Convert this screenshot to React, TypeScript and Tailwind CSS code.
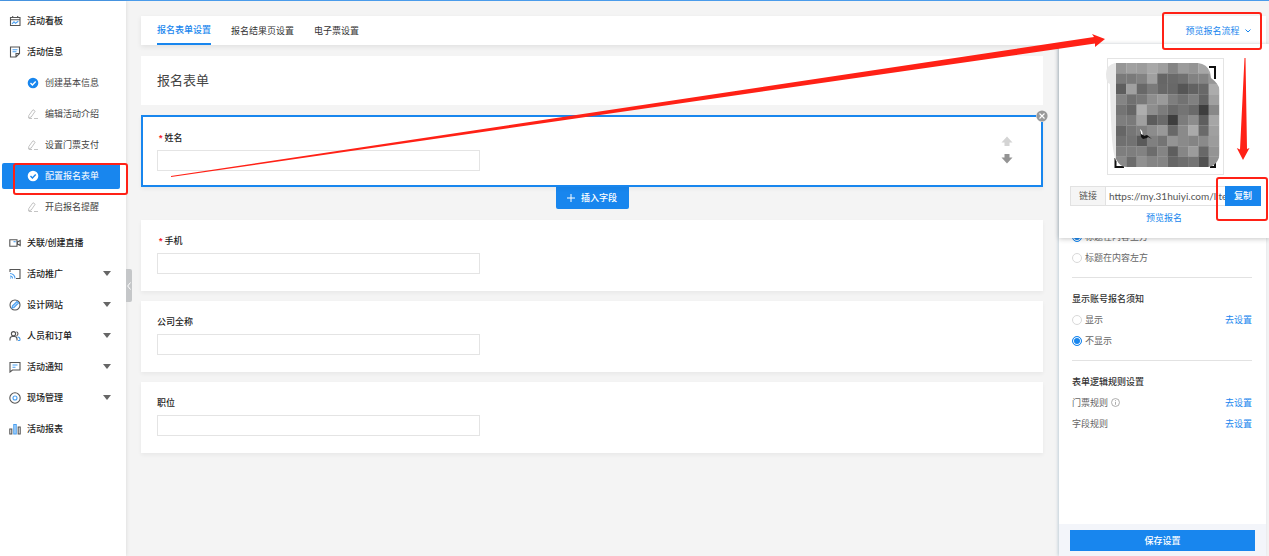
import React, { useState } from "react";

const MOSAIC = [
  [150, 160, 156, 168, 158, 132, 155, 148, 166, 172],
  [122, 122, 130, 160, 102, 106, 112, 130, 132, 150],
  [94, 160, 104, 122, 104, 104, 86, 98, 104, 172],
  [132, 112, 120, 142, 154, 126, 114, 128, 100, 160],
  [116, 102, 174, 142, 124, 106, 116, 106, 62, 136],
  [126, 122, 160, 92, 106, 62, 124, 140, 94, 166],
  [102, 118, 128, 140, 152, 104, 138, 170, 106, 160],
  [112, 114, 90, 128, 116, 148, 138, 132, 138, 156],
  [126, 126, 130, 108, 132, 94, 134, 156, 104, 148],
  [138, 108, 144, 132, 132, 102, 110, 116, 82, 146],
];

type IconName =
  | "board" | "info" | "live" | "cast" | "design" | "people" | "notice" | "onsite" | "report";

function MenuIcon({ name }: { name: IconName }) {
  const dark = "#555";
  const blue = "#4a9ff0";
  return (
    <svg viewBox="0 0 12 12" className="size-3 shrink-0" fill="none" stroke={dark} strokeWidth="1.1">
      {name === "board" && (
        <>
          <path d="M1.500 2.500h9.500v8h-9.500zM1.500 4.700h9.500M3.700 1v2M8.700 1v2" />
          <path d="M3 8.800l2-2 1.500 1.500L9.300 6.300" stroke={blue} />
        </>
      )}
      {name === "info" && (
        <>
          <path d="M10.500 7.500V1h-9v10h5.500zM10.500 7.500H7V11" />
          <path d="M3.500 3.700h5M3.500 5.700h4" stroke={blue} />
        </>
      )}
      {name === "live" && (
        <>
          <path d="M.8 2.800h7.200v6.500H.8zM8.500 5l2.700-1.500v5L8.500 7z" />
          <path d="M4.500 4.700h2.200" stroke={blue} />
        </>
      )}
      {name === "cast" && (
        <>
          <path d="M1 4V1.500h10v9H7" />
          <path d="M1 5.500A5 5 0 0 1 6 10.500M1 8a2.500 2.500 0 0 1 2.500 2.500M1 10h1" stroke={blue} />
        </>
      )}
      {name === "design" && (
        <>
          <circle cx="6" cy="6" r="5" />
          <path d="M3 9l.5-2.200L8 2.500l1.500 1.500L5 8.500z" stroke={blue} fill="#b9dbfb" />
        </>
      )}
      {name === "people" && (
        <>
          <circle cx="4.500" cy="3.700" r="2.100" />
          <path d="M1 10.500V9a2.500 2.500 0 0 1 2.500-2.500h2A2.500 2.500 0 0 1 8 9v1.500M7.500 1.700a2.100 2.100 0 0 1 0 4" />
          <path d="M8.500 7a2.500 2.500 0 0 1 2.500 2.500v1M9 10.500h2" stroke={blue} />
        </>
      )}
      {name === "notice" && (
        <>
          <path d="M1 11V1.500h10V9H3.500z" />
          <path d="M3.500 4h5M3.500 6.200h3" stroke={blue} />
        </>
      )}
      {name === "onsite" && (
        <>
          <circle cx="6" cy="6" r="5.200" />
          <circle cx="6" cy="6" r="2" stroke={blue} />
        </>
      )}
      {name === "report" && (
        <>
          <path d="M.8 6h2v5h-2zM9.200 4h2v7h-2z" />
          <path d="M4.800 1.500h2.400V11H4.800z" stroke={blue} fill="#b9dbfb" />
        </>
      )}
    </svg>
  );
}

function CheckDot({ inverted }: { inverted?: boolean }) {
  return (
    <svg viewBox="0 0 12 12" className="size-3 shrink-0">
      <circle cx="6" cy="6" r="5.300" fill={inverted ? "#fff" : "#1886ee"} />
      <path d="M3.500 6l1.900 1.900L8.700 4.600" fill="none" stroke={inverted ? "#1886ee" : "#fff"} strokeWidth="1.400" />
    </svg>
  );
}

function Pencil() {
  return (
    <svg viewBox="0 0 12 12" className="size-3 shrink-0" fill="none" stroke="#c4c4c4">
      <path d="M1.800 7.500L6 1.700 8.200 3.200 4.200 9 1.500 10zM2 10.500h3M7 10.500H11" />
    </svg>
  );
}

function MenuRow({ icon, label, open }: { icon: IconName; label: string; open?: boolean }) {
  return (
    <a href="#" className="flex h-[31px] items-center gap-[6px] pr-[15px] pl-[9px] font-medium text-[#222]">
      <MenuIcon name={icon} />
      <span className="flex-1">{label}</span>
      {open && (
        <svg viewBox="0 0 8 5" className="h-[5px] w-2" fill="#666"><path d="M0 0h8L4 5z" /></svg>
      )}
    </a>
  );
}

function SubRow({ label, state }: { label: string; state: "done" | "todo" | "active" }) {
  if (state === "active") {
    return (
      <div className="flex h-[31px] items-center pr-[6px] pl-[2px]">
        <a href="#" className="relative flex h-[26px] flex-1 items-center gap-[6px] rounded-xs bg-[#1886ee] pl-[25px] text-white">
          <CheckDot inverted />
          {label}
          <span className="pointer-events-none absolute top-0 -right-[8px] -bottom-[6px] left-[11px] z-20 rounded-[3px] border-2 border-[#ff2116]" />
        </a>
      </div>
    );
  }
  return (
    <a href="#" className="flex h-[31px] items-center gap-[6px] pl-[27px] text-[#444]">
      {state === "done" ? <CheckDot /> : <Pencil />}
      {label}
    </a>
  );
}

function Sidebar() {
  return (
    <aside className="relative w-[126px] shrink-0 bg-white pt-[4px] shadow-[0_0_4px_rgba(0,0,0,0.12)]">
      <nav>
        <MenuRow icon="board" label="活动看板" />
        <MenuRow icon="info" label="活动信息" />
        <SubRow label="创建基本信息" state="done" />
        <SubRow label="编辑活动介绍" state="todo" />
        <SubRow label="设置门票支付" state="todo" />
        <SubRow label="配置报名表单" state="active" />
        <SubRow label="开启报名提醒" state="todo" />
        <div className="pt-[5px]">
          <MenuRow icon="live" label="关联/创建直播" />
          <MenuRow icon="cast" label="活动推广" open />
          <MenuRow icon="design" label="设计网站" open />
          <MenuRow icon="people" label="人员和订单" open />
          <MenuRow icon="notice" label="活动通知" open />
          <MenuRow icon="onsite" label="现场管理" open />
          <MenuRow icon="report" label="活动报表" />
        </div>
      </nav>
      <button aria-label="收起" className="absolute top-[268px] left-full flex h-[33px] w-[6px] items-center justify-center rounded-r-xs bg-[#c5c7c9]">
        <svg viewBox="0 0 4 8" className="h-2 w-1" fill="none" stroke="#fff"><path d="M3.500 .5L.7 4l2.800 3.500" /></svg>
      </button>
    </aside>
  );
}

function Field({ id, label, required }: { id: string; label: string; required?: boolean }) {
  return (
    <div className="flex flex-col items-start gap-[5px]">
      <label htmlFor={id} className="flex h-[14px] items-center gap-[2px] font-medium text-[#222]">
        {required && <span className="pl-[2px] font-bold text-[#f5222d]">*</span>}
        {label}
      </label>
      <input id={id} className="h-[21px] w-full max-w-[323px] border border-[#e4e4e4] bg-white px-2 outline-none" />
    </div>
  );
}

function FieldCard({ id, label, required }: { id: string; label: string; required?: boolean }) {
  return (
    <section className="h-[71px] bg-white px-4 pt-[14px] shadow-[0_2px_4px_rgba(0,0,0,0.05)]">
      <Field id={id} label={label} required={required} />
    </section>
  );
}

function Radio({ name, label, checked, onChange }: { name: string; label: string; checked: boolean; onChange: () => void }) {
  return (
    <label className="flex h-[21px] items-center gap-[3px]">
      <input
        type="radio"
        name={name}
        checked={checked}
        onChange={onChange}
        className="size-[10px] appearance-none rounded-full border border-[#d9d9d9] bg-white checked:border-[#1886ee] checked:bg-[#1886ee] checked:shadow-[inset_0_0_0_1px_#fff]"
      />
      {label}
    </label>
  );
}

function GoSet() {
  return <a href="#" className="text-[#1886ee]">去设置</a>;
}

function SettingsPanel() {
  const [place, setPlace] = useState("top");
  const [notice, setNotice] = useState("hide");
  return (
    <aside className="flex w-[207px] shrink-0 flex-col bg-white text-[#666] shadow-[-1px_0_3px_rgba(100,140,170,0.35)]">
      <div className="flex-1 pt-[181px] pr-[14px] pl-[13px]">
        <Radio name="place" label="标题在内容上方" checked={place === "top"} onChange={() => setPlace("top")} />
        <Radio name="place" label="标题在内容左方" checked={place === "left"} onChange={() => setPlace("left")} />
        <section className="mt-[9px] border-t border-[#e2e2e2] pt-[11px]">
          <h3 className="h-[20px] font-medium leading-[20px] text-[#333]">显示账号报名须知</h3>
          <div className="flex items-center justify-between">
            <Radio name="notice" label="显示" checked={notice === "show"} onChange={() => setNotice("show")} />
            <GoSet />
          </div>
          <Radio name="notice" label="不显示" checked={notice === "hide"} onChange={() => setNotice("hide")} />
        </section>
        <section className="mt-[9px] border-t border-[#e2e2e2] pt-[11px]">
          <h3 className="h-[20px] font-medium leading-[20px] text-[#333]">表单逻辑规则设置</h3>
          <div className="flex h-[21px] items-center justify-between">
            <span className="flex items-center gap-[3px]">
              门票规则
              <svg viewBox="0 0 10 10" className="size-[9px]" fill="none" stroke="#999" strokeWidth=".9">
                <circle cx="5" cy="5" r="4.400" /><path d="M5 4.300V7.500M5 2.400v1" />
              </svg>
            </span>
            <GoSet />
          </div>
          <div className="flex h-[21px] items-center justify-between">
            <span>字段规则</span>
            <GoSet />
          </div>
        </section>
      </div>
      <div className="bg-[#f3f5fa] px-[11px] pt-[6px] pb-[5px]">
        <button className="h-[21px] w-full bg-[#1886ee] font-medium text-white">保存设置</button>
      </div>
    </aside>
  );
}

function QrCode() {
  return (
    <svg viewBox="0 0 118 118" className="ml-[2px] size-[118px]" aria-label="二维码">
      <rect x="1.500" y=".5" width="116" height="116" fill="#fff" stroke="#e4e4e4" />
      <path d="M103 9h6v12M9.500 100v9H18M104 109h5v-9" fill="none" stroke="#111" strokeWidth="2" />
      <path d="M9 5h8v98h-7q-3-8-4-22T4 26q-4-1-4-10T9 5z" fill="#e8e8e8" />
      <clipPath id="qr-blur">
        <path d="M10 5H92q9 1 12 9l1 6q7 5 9 12V95q-2 13-12 14H20q-6 0-10-8z" />
      </clipPath>
      <g clipPath="url(#qr-blur)">
        {MOSAIC.map((row, y) =>
          row.map((v, x) => (
            <rect key={`${x}-${y}`} x={10 + x * 10.3} y={5 + y * 10.4} width="10.500" height="10.600" fill={`rgb(${v},${v},${v})`} />
          )),
        )}
      </g>
      <path d="M34 72l1 7 2 2 4-1 1-1 4 2-5-4-3 1z" fill="#111" />
      <path d="M34 71l1 5 2 1-1-4z" fill="#fff" />
    </svg>
  );
}

function PreviewPopover() {
  return (
    <div className="absolute top-[43px] right-0 z-10 flex w-[210px] flex-col items-center bg-white pt-[14px] pb-[13px] shadow-[0_1px_5px_rgba(0,0,0,0.22)]">
      <QrCode />
      <div className="mt-[10px] flex h-[20px] self-start pl-[11px]">
        <label htmlFor="link" className="flex w-[36px] shrink-0 items-center justify-center border border-[#e2e2e2] bg-[#f5f5f5] text-[#555]">链接</label>
        <input id="link" readOnly value="https://my.31huiyi.com/lite" className="w-[119px] min-w-0 shrink-0 border-y border-[#e2e2e2] pl-[3px] font-['Lato','Open_Sans',sans-serif] text-[10px] text-[#555] outline-none" />
        <button className="relative w-[36px] shrink-0 bg-[#1886ee] font-medium text-white">
          复制
          <span className="pointer-events-none absolute -top-[9px] -right-[7px] -bottom-[15px] -left-[9px] rounded-[3px] border-2 border-[#ff2116]" />
        </button>
      </div>
      <a href="#" className="mt-[5px] leading-[14px] text-[#1886ee]">预览报名</a>
      <svg viewBox="0 0 14 104" className="pointer-events-none absolute top-[14px] right-[19px] h-[104px] w-[14px]" fill="#ff2116">
        <path d="M8.500 0h1l1.500 91 2.500-1L7 102 .8 90l3.200 1.500z" />
      </svg>
    </div>
  );
}

export default function App() {
  return (
    <div className="relative flex min-h-screen border-t border-[#4a9bea] bg-[#f4f4f4] font-['Liberation_Sans','Noto_Sans_CJK_SC',sans-serif] text-[9px] leading-[14px]">
      <Sidebar />
      <div className="flex min-w-0 flex-1 flex-col pt-[15px] pr-[3px] pl-[15px]">
        <header className="flex h-[29px] items-stretch bg-white shadow-[0_2px_5px_rgba(0,0,0,0.08)]">
          <nav className="flex flex-1 gap-[20px] pl-4 text-[#333]">
            <a href="#" className="flex items-center border-b-2 border-[#1886ee] font-medium text-[#1886ee]">报名表单设置</a>
            <a href="#" className="flex items-center">报名结果页设置</a>
            <a href="#" className="flex items-center">电子票设置</a>
          </nav>
          <button className="relative flex w-[96px] items-center justify-center gap-[5px] text-[#1886ee]">
            预览报名流程
            <svg viewBox="0 0 6 4" className="h-1 w-[6px]" fill="none" stroke="#1886ee"><path d="M.5 .5L3 3 5.500 .5" /></svg>
            <span className="pointer-events-none absolute -top-[4px] right-[4px] -bottom-[5px] -left-[8px] z-20 rounded-[3px] border-2 border-[#ff2116]" />
          </button>
        </header>
        <div className="flex flex-1 gap-4">
          <main className="min-w-0 flex-1 pt-[11px]">
            <h1 className="flex h-[49px] items-center bg-white pl-4 text-[13px] text-[#444]">报名表单</h1>
            <section className="relative mt-[10px] flex h-[72px] justify-between border-2 border-[#1886ee] bg-white pt-[14px] pr-[28px] pl-[14px] shadow-[0_2px_4px_rgba(0,0,0,0.05)]">
              <div className="flex-1"><Field id="name" label="姓名" required /></div>
              <div className="flex flex-col gap-[6px] pt-[5px]">
                <button aria-label="上移"><svg viewBox="0 0 12 11" className="h-[11px] w-3" fill="#d4d4d4"><path d="M6 .5l5.500 6H8.500V10h-5V6.500H.5z" /></svg></button>
                <button aria-label="下移"><svg viewBox="0 0 12 11" className="h-[11px] w-3" fill="#949494"><path d="M6 10.500l5.500-6H8.500V1h-5v3.500H.5z" /></svg></button>
              </div>
              <button aria-label="删除" className="absolute -top-[7px] -right-[7px] rounded-full bg-[#f4f4f4]">
                <svg viewBox="0 0 12 12" className="size-3"><circle cx="6" cy="6" r="5.600" fill="#999" /><path d="M3.500 3.500l5 5M8.500 3.500l-5 5" stroke="#fff" strokeWidth="1.100" /></svg>
              </button>
            </section>
            <div className="flex h-[33px] items-start justify-center">
              <button className="flex h-[22px] w-[73px] items-center justify-center gap-[6px] rounded-b-xs bg-[#1886ee] font-medium text-white">
                <svg viewBox="0 0 8 8" className="size-2" stroke="#fff"><path d="M4 0v8M0 4h8" /></svg>
                插入字段
              </button>
            </div>
            <div className="flex flex-col gap-[10px]">
              <FieldCard id="phone" label="手机" required />
              <FieldCard id="company" label="公司全称" />
              <FieldCard id="position" label="职位" />
            </div>
          </main>
          <SettingsPanel />
        </div>
      </div>
      <PreviewPopover />
      <svg viewBox="0 0 935 146" preserveAspectRatio="none" className="pointer-events-none absolute top-[32px] right-[163px] left-[171px] z-20 h-[146px] w-[calc(100%-334px)]" fill="#ff2116">
        <path d="M0 143L923 4 921 1 934 6 924 14 924 10.500 0 144z" />
      </svg>
    </div>
  );
}
